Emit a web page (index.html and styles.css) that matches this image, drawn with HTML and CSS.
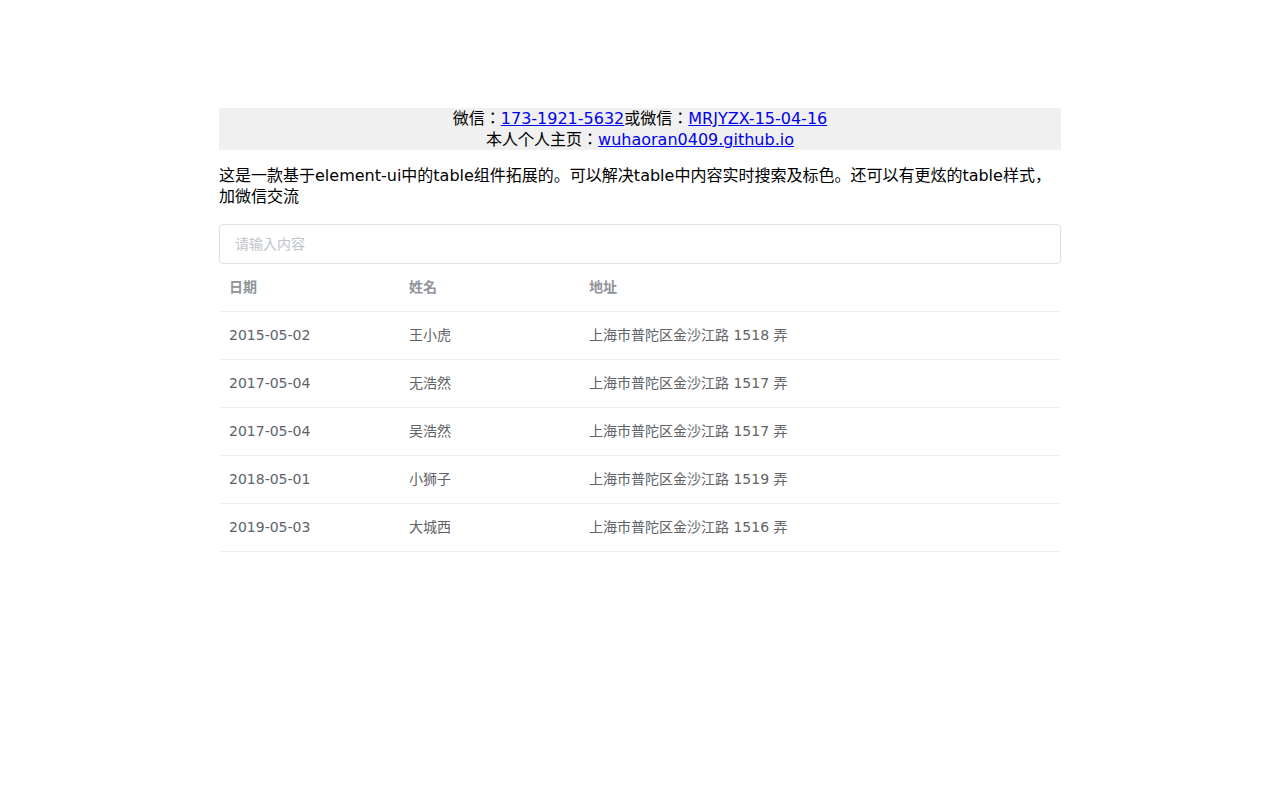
FILE: index.html
```html
<!DOCTYPE html>
<html>
<head>
<meta charset="utf-8">
<link rel="stylesheet" href="styles.css">
</head>
<body>
<div class="page">
  <div class="contact">
    <div>微信：<a href="#">173-1921-5632</a>或微信：<a href="#">MRJYZX-15-04-16</a></div>
    <div>本人个人主页：<a href="#">wuhaoran0409.github.io</a></div>
  </div>
  <p class="intro">这是一款基于element-ui中的table组件拓展的。可以解决table中内容实时搜索及标色。还可以有更炫的table样式，加微信交流</p>
  <div class="input-wrap"><input class="search" type="text" placeholder="请输入内容"></div>
  <table class="table">
    <colgroup><col class="c1"><col class="c2"><col></colgroup>
    <thead>
      <tr><th>日期</th><th>姓名</th><th>地址</th></tr>
    </thead>
    <tbody>
      <tr><td>2015-05-02</td><td>王小虎</td><td>上海市普陀区金沙江路 1518 弄</td></tr>
      <tr><td>2017-05-04</td><td>无浩然</td><td>上海市普陀区金沙江路 1517 弄</td></tr>
      <tr><td>2017-05-04</td><td>吴浩然</td><td>上海市普陀区金沙江路 1517 弄</td></tr>
      <tr><td>2018-05-01</td><td>小狮子</td><td>上海市普陀区金沙江路 1519 弄</td></tr>
      <tr><td>2019-05-03</td><td>大城西</td><td>上海市普陀区金沙江路 1516 弄</td></tr>
    </tbody>
  </table>
</div>
</body>
</html>
```
FILE: styles.css
```css
html, body {
  margin: 0;
  padding: 0;
  background: #fff;
}
body {
  font-family: "DejaVu Sans", "Noto Sans CJK JP", sans-serif;
  font-size: 16px;
  color: #000;
}
.page {
  width: 842px;
  margin: 108px auto 0;
}
.contact {
  background: #f0f0f0;
  text-align: center;
  line-height: 21px;
}
.contact a {
  color: #0000ee;
  text-decoration: underline;
}
.intro {
  margin: 15px 0 17px;
  line-height: 21px;
}
.input-wrap {
  display: flex;
}
.search {
  flex: 1;
  box-sizing: border-box;
  height: 40px;
  border: 1px solid #dcdfe6;
  border-radius: 4px;
  padding: 0 15px;
  font-family: "DejaVu Sans", "Noto Sans CJK JP", sans-serif;
  font-size: 14px;
  color: #606266;
  outline: none;
}
.search::placeholder {
  color: #c0c4cc;
}
.table {
  width: 100%;
  border-collapse: separate;
  border-spacing: 0;
  table-layout: fixed;
  font-size: 14px;
}
.c1, .c2 { width: 180px; }
.table th, .table td {
  padding: 12px 10px;
  text-align: left;
  border-bottom: 1px solid #ebeef5;
  line-height: 23px;
}
.table th {
  color: #909399;
  font-weight: bold;
}
.table td {
  color: #606266;
}
```
